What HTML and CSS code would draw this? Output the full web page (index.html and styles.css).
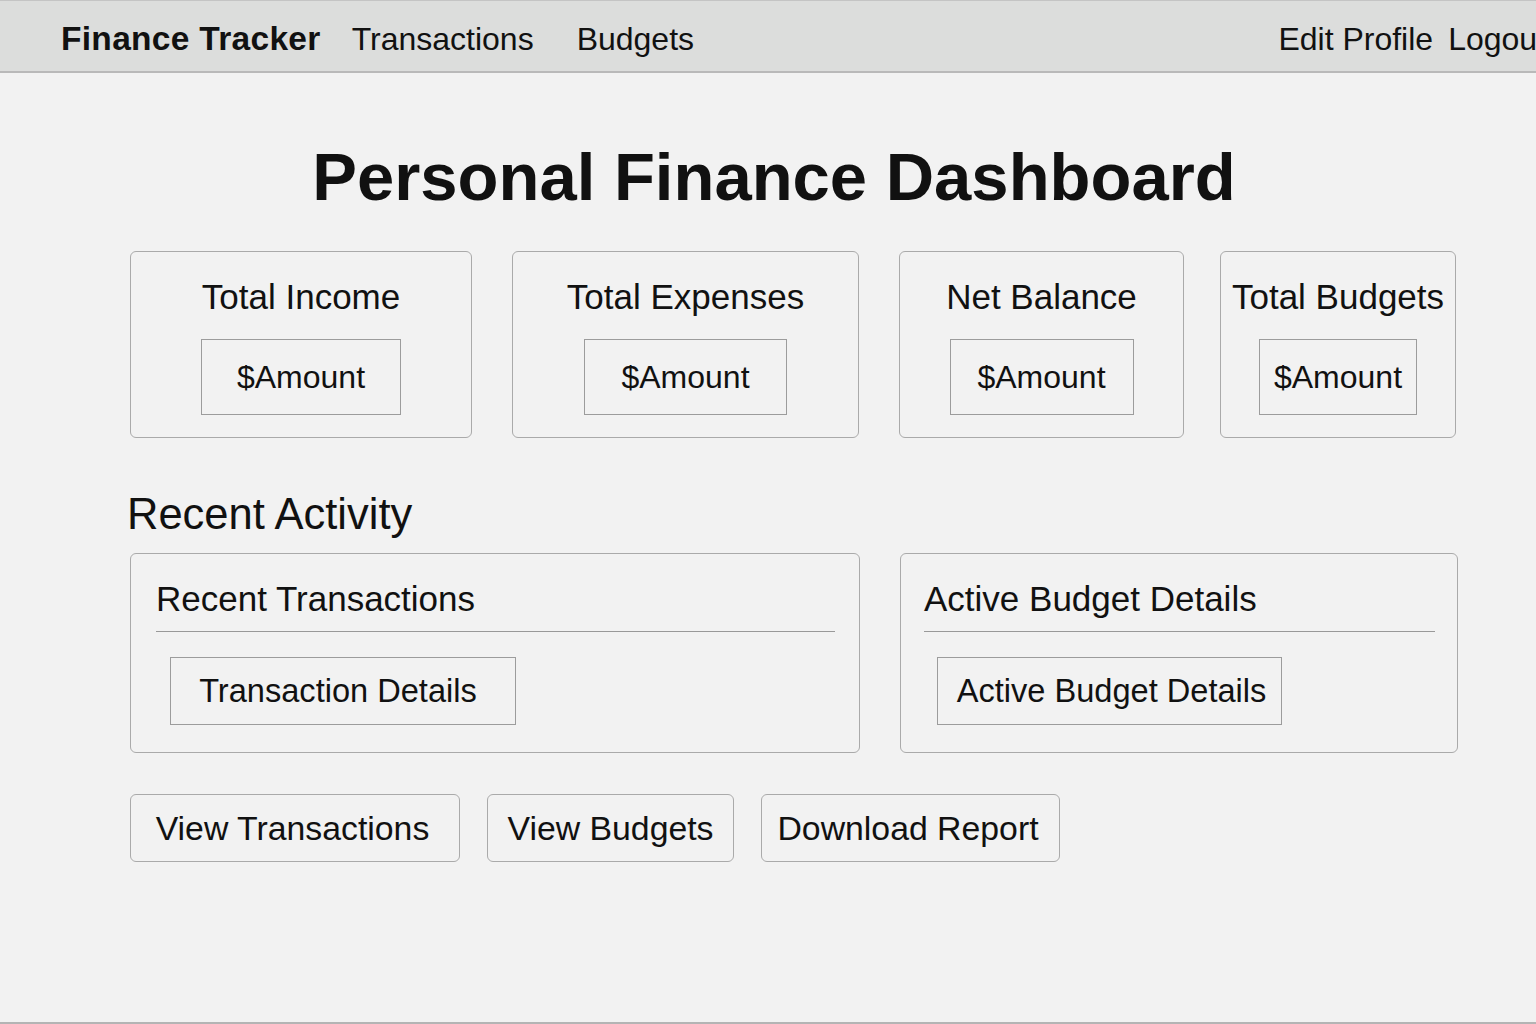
FILE: index.html
```html
<!DOCTYPE html>
<html lang="en">
<head>
<meta charset="utf-8">
<title>Finance Tracker</title>
<link rel="stylesheet" href="styles.css">
</head>
<body>
<div class="page">
  <header class="topbar">
    <nav class="nav-left">
      <a class="brand" href="#">Finance Tracker</a>
      <a class="nav-link" href="#">Transactions</a>
      <a class="nav-link" href="#">Budgets</a>
    </nav>
    <nav class="nav-right">
      <a class="nav-link" href="#">Edit Profile</a>
      <a class="nav-link" href="#">Logout</a>
    </nav>
  </header>

  <main class="content">
    <h1 class="title">Personal Finance Dashboard</h1>

    <section class="stats">
      <div class="stat">
        <div class="stat-label">Total Income</div>
        <div class="stat-value v-income">$Amount</div>
      </div>
      <div class="stat">
        <div class="stat-label">Total Expenses</div>
        <div class="stat-value v-expenses">$Amount</div>
      </div>
      <div class="stat">
        <div class="stat-label">Net Balance</div>
        <div class="stat-value v-balance">$Amount</div>
      </div>
      <div class="stat">
        <div class="stat-label">Total Budgets</div>
        <div class="stat-value v-budgets">$Amount</div>
      </div>
    </section>

    <h2 class="section-title">Recent Activity</h2>

    <section class="activity">
      <div class="panel panel-tx">
        <div class="panel-title">Recent Transactions</div>
        <div class="panel-box">Transaction Details</div>
      </div>
      <div class="panel panel-budget">
        <div class="panel-title">Active Budget Details</div>
        <div class="panel-box">Active Budget Details</div>
      </div>
    </section>

    <section class="actions">
      <button class="btn btn-tx">View Transactions</button>
      <button class="btn btn-budgets">View Budgets</button>
      <button class="btn btn-report">Download Report</button>
    </section>
  </main>
</div>
</body>
</html>
```
FILE: styles.css
```css
* { box-sizing: border-box; }

html, body {
  margin: 0;
  padding: 0;
  background: #f2f2f2;
}

body {
  font-family: "Liberation Sans", Arial, sans-serif;
  color: #111;
  overflow: hidden;
}

.page {
  height: 1024px;
  border-bottom: 2px solid #b4b4b4;
  overflow: hidden;
}

.topbar {
  height: 73px;
  background: #dcdddc;
  border-top: 1px solid #c4c4c4;
  border-bottom: 2px solid #b9b9b9;
  display: flex;
  align-items: center;
  justify-content: space-between;
  padding-left: 61px;
  padding-top: 6px;
  overflow: hidden;
}

.nav-left, .nav-right {
  display: flex;
  align-items: center;
  flex-shrink: 0;
}

.nav-right {
  margin-right: -10px;
  gap: 15px;
}

.topbar a {
  color: #111;
  text-decoration: none;
  white-space: nowrap;
}

.brand {
  font-weight: bold;
  font-size: 33.5px;
  letter-spacing: 0.3px;
  margin-right: 31px;
}

.nav-left .nav-link + .nav-link {
  margin-left: 43px;
}

.nav-link {
  font-size: 32px;
}

.content {
  padding-left: 130px;
}

.title {
  margin: 66px 0 0;
  font-size: 67px;
  font-weight: bold;
  line-height: 76px;
  text-align: center;
  width: 1288px;
}

.stats {
  display: grid;
  grid-template-columns: 342px 347px 285px 236px;
  column-gap: 40px;
  margin-top: 36px;
}

.stats .stat:nth-child(4) {
  margin-left: -4px;
  margin-right: 4px;
}

.stat {
  border: 1px solid #aaaaaa;
  border-radius: 6px;
  padding: 25px 0 22px;
  display: flex;
  flex-direction: column;
  align-items: center;
}

.stat-label {
  font-size: 35px;
  line-height: 40px;
  white-space: nowrap;
}

.stat-value {
  margin-top: 22px;
  height: 76px;
  border: 1px solid #9c9c9c;
  font-size: 32px;
  display: flex;
  align-items: center;
  justify-content: center;
}

.v-income { width: 200px; }
.v-expenses { width: 203px; }
.v-balance { width: 184px; }
.v-budgets { width: 158px; }

.section-title {
  margin: 51px 0 0 -3px;
  font-size: 43.5px;
  font-weight: normal;
  line-height: 50px;
}

.activity {
  display: grid;
  grid-template-columns: 730px 558px;
  column-gap: 40px;
  margin-top: 14px;
}

.panel {
  height: 200px;
  border: 1px solid #aaaaaa;
  border-radius: 6px;
  padding: 25px 24px 0 25px;
}

.panel-budget {
  padding-left: 23px;
  padding-right: 22px;
}

.panel-title {
  font-size: 35px;
  line-height: 40px;
  padding-bottom: 12px;
  border-bottom: 1px solid #999999;
  white-space: nowrap;
}

.panel-box {
  margin-top: 25px;
  height: 68px;
  border: 1px solid #9c9c9c;
  font-size: 32.6px;
  display: flex;
  align-items: center;
  justify-content: center;
  white-space: nowrap;
}

.panel-tx .panel-box { width: 346px; margin-left: 14px; padding-right: 10px; }
.panel-budget .panel-box { width: 345px; margin-left: 13px; padding-left: 4px; }

.actions {
  display: flex;
  gap: 27px;
  margin-top: 41px;
}

.btn {
  height: 68px;
  border: 1px solid #aaaaaa;
  border-radius: 6px;
  background: transparent;
  font-family: "Liberation Sans", Arial, sans-serif;
  font-size: 33.8px;
  color: #111;
  padding: 0;
  display: flex;
  align-items: center;
  justify-content: center;
  white-space: nowrap;
}

.btn-tx { width: 330px; padding-right: 5px; }
.btn-budgets { width: 247px; }
.btn-report { width: 299px; padding-right: 5px; }
```
